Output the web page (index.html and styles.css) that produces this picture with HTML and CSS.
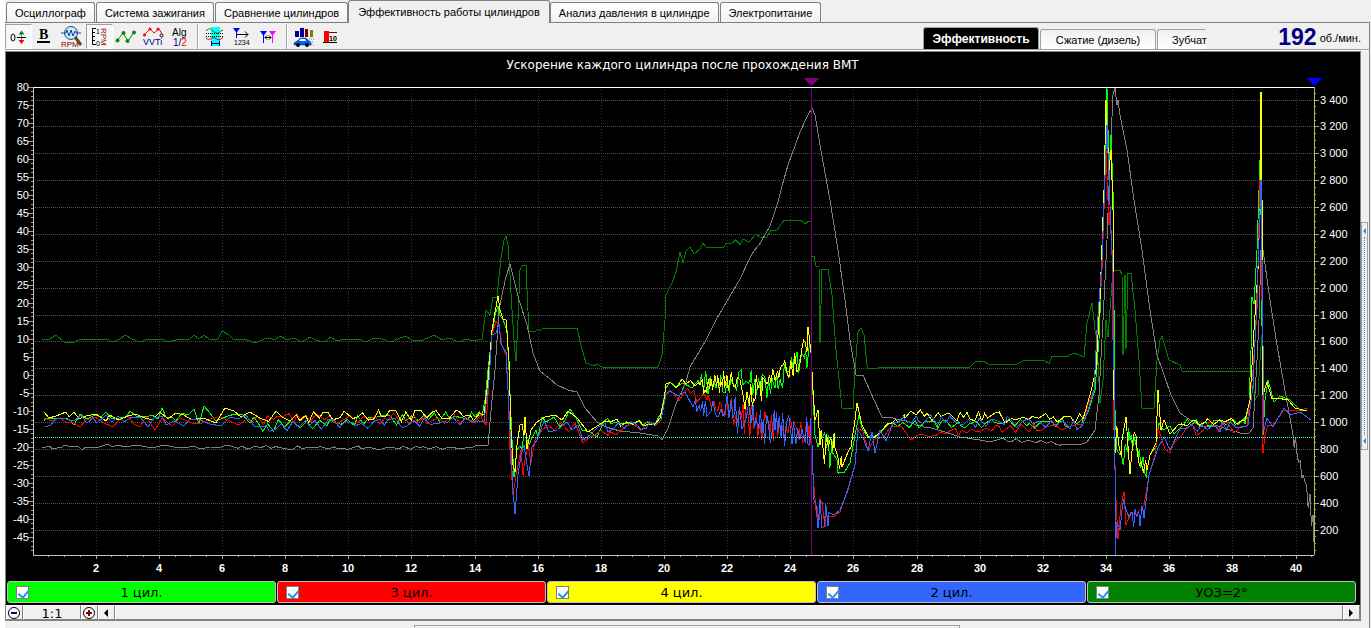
FILE: index.html
```html
<!DOCTYPE html>
<html lang="ru">
<head>
<meta charset="utf-8">
<title>Эффективность работы цилиндров</title>
<link rel="stylesheet" href="styles.css">
</head>
<body>
<div class="window">
  <nav class="tabs" role="tablist">
    <button class="tab" role="tab">Осциллограф</button>
    <button class="tab" role="tab">Система зажигания</button>
    <button class="tab" role="tab">Сравнение цилиндров</button>
    <button class="tab tab-active" role="tab" aria-selected="true">Эффективность работы цилиндров</button>
    <button class="tab" role="tab">Анализ давления в цилиндре</button>
    <button class="tab" role="tab">Электропитание</button>
  </nav>

  <div class="page">
    <header class="toolbar">
      <div class="tools">
        <button class="tool tool-pressed" aria-label="Сдвиг нуля">
          <svg viewBox="0 0 26 24"><ellipse cx="7" cy="12.500" rx="2" ry="3.500" fill="none" stroke="#000"/><path d="M11 12.500h9" stroke="#000"/><path d="M15.500 12V8M15.500 13v4" stroke="#808080"/><path d="M12.500 9.500l3-4 3 4z" fill="#108a10"/><path d="M12.500 15l3 4 3-4z" fill="#f00"/></svg>
        </button>
        <button class="tool" aria-label="Жирные линии">
          <svg viewBox="0 0 26 24"><text class="icon-bold" x="7" y="14">B</text><path d="M5 17h13" stroke="#000" stroke-width="2"/></svg>
        </button>
        <button class="tool" aria-label="Поиск по оборотам">
          <svg viewBox="0 0 26 24"><circle cx="12" cy="8" r="6.500" fill="#c8ecf8" stroke="#234a78"/><path d="M16 12l6 8" stroke="#5f4630" stroke-width="3"/><path d="M2 8h5l1-3 2 6 2-6 2 6 2-5 1 2h5" fill="none" stroke="#1640b0"/><text class="icon-rpm" x="2" y="22">RPM</text></svg>
        </button>
        <button class="tool tool-pressed" aria-label="Шкала оборотов">
          <svg viewBox="0 0 26 24"><path d="M9 3.500H5.500v16H9M6 7.500h2M6 11.500h2M6 15.500h2" fill="none" stroke="#000"/><text class="icon-mini" x="9" y="9">1</text><text class="icon-mini" x="9" y="21">0</text><text class="icon-rpm icon-vertical" x="3" y="-14" transform="rotate(90)">RPM</text></svg>
        </button>
        <button class="tool" aria-label="Точки графика">
          <svg viewBox="0 0 26 24"><path d="M4 16l6-8 5 8 6-9" fill="none" stroke="#009000"/><g fill="#008a00"><circle cx="4.500" cy="15.500" r="2"/><circle cx="10.500" cy="8" r="2"/><circle cx="14.500" cy="16" r="2"/><circle cx="21" cy="7.500" r="2"/></g></svg>
        </button>
        <button class="tool" aria-label="VVTi">
          <svg viewBox="0 0 26 24"><path d="M4 10l6-6 4 4 5-4 3 5" fill="none" stroke="#f00"/><g fill="#f00"><circle cx="4.500" cy="10" r="1.500"/><circle cx="10" cy="4" r="1.500"/><circle cx="18" cy="4" r="1.500"/></g><circle cx="21.500" cy="10.500" r="1.500" fill="#fff" stroke="#000"/><text class="icon-vvt" x="3" y="20">VVTi</text></svg>
        </button>
        <button class="tool" aria-label="Алгоритм">
          <svg viewBox="0 0 26 24"><text class="icon-alg" x="5" y="11">Alg</text><text class="icon-alg" x="6" y="21" fill="#000080">1/<tspan fill="#f00">2</tspan></text></svg>
        </button>
        <span class="divider"></span>
        <button class="tool" aria-label="Окно сравнения">
          <svg viewBox="0 0 26 24"><path d="M9 2h9v19H9z" fill="#0ff"/><path d="M4 6c3-3 4-3 7 0s6 3 9-1l1 1" fill="none" stroke="#008a00"/><path d="M4 8.500h18M4 11.500h18" stroke="#000" stroke-dasharray="1 1"/><path d="M4 13c4 4 6-2 9 0s5 3 8-1" fill="none" stroke="#d00000"/><path d="M10 18.500h7M9.500 16v5M17.500 16v5" stroke="#000080"/></svg>
        </button>
        <button class="tool" aria-label="Нумерация меток">
          <svg viewBox="0 0 26 24"><path d="M4 3h7l-3.500 5z" fill="#00f"/><path d="M7.500 7v6" stroke="#00f"/><path d="M8 9.500h11M16 6.500l3 3-3 3" fill="none" stroke="#000"/><text class="icon-mini" x="5" y="20">1234</text></svg>
        </button>
        <button class="tool" aria-label="Между метками">
          <svg viewBox="0 0 26 24"><path d="M4 6h7l-3.500 5z" fill="#00f"/><path d="M7.500 9v9" stroke="#00f"/><path d="M13 6h7l-3.500 5z" fill="#f0f"/><path d="M16.500 9v9" stroke="#f0f"/><path d="M9 12.500h6M11 10.500l-2 2 2 2M13 10.500l2 2-2 2" fill="none" stroke="#000"/></svg>
        </button>
        <span class="divider"></span>
        <button class="tool" aria-label="Разгон автомобиля">
          <svg viewBox="0 0 26 24"><path d="M4 6h4v6H4z" fill="#000080"/><path d="M9 3h4v9H9z" fill="#0000a0"/><path d="M14 4h3v8h-3z" fill="#800000"/><path d="M19 5h3v7h-3z" fill="#808000"/><path d="M3 18l3-2 4-3h5l3 3 2 1v3H3z" fill="#0068e8" stroke="#001070" stroke-width=".5"/><path d="M8 16l2-2h4l1 2z" fill="#fff"/><circle cx="7" cy="20" r="2"/><circle cx="16" cy="20" r="2"/><path d="M18 14h5M19 17h4M20 20h3" stroke="#888" stroke-dasharray="1 1"/></svg>
        </button>
        <button class="tool" aria-label="Уровень">
          <svg viewBox="0 0 26 24"><path d="M6 6h5v11H6z" fill="#f00"/><path d="M5 17.500h14" stroke="#000"/><path d="M11 7.500h8" stroke="#800000"/><text class="icon-mini icon-strong" x="11" y="16">10</text></svg>
        </button>
      </div>
      <div class="subtabs" role="tablist">
        <button class="subtab subtab-active" role="tab" aria-selected="true">Эффективность</button>
        <button class="subtab" role="tab">Сжатие (дизель)</button>
        <button class="subtab subtab-cut" role="tab">Зубчат</button>
      </div>
      <div class="speed"><strong class="speed-value">192</strong> <span class="speed-unit">об./мин.</span></div>
    </header>

    <div class="body">
      <main class="panel">
        <div class="chart-area"><svg class="chart" id="chart" role="img" aria-label="Ускорение каждого цилиндра"></svg></div>
        <div class="legend">
          <label class="series series-green"><input class="check" type="checkbox" checked><span class="series-name">1 цил.</span></label>
          <label class="series series-red"><input class="check" type="checkbox" checked><span class="series-name">3 цил.</span></label>
          <label class="series series-yellow"><input class="check" type="checkbox" checked><span class="series-name">4 цил.</span></label>
          <label class="series series-blue"><input class="check" type="checkbox" checked><span class="series-name">2 цил.</span></label>
          <label class="series series-dark"><input class="check" type="checkbox" checked><span class="series-name">УОЗ=2°</span></label>
        </div>
        <div class="scroller">
          <button class="zoom-button" aria-label="Уменьшить"><svg viewBox="0 0 14 14"><circle cx="7" cy="7" r="5.500" fill="#fff" stroke="#000"/><path d="M4 7h6" stroke="#000080" stroke-width="2"/></svg></button>
          <button class="ratio">1:1</button>
          <button class="zoom-button" aria-label="Увеличить"><svg viewBox="0 0 14 14"><circle cx="7" cy="7" r="5.500" fill="#fff" stroke="#000"/><path d="M4 7h6M7 4v6" stroke="#800000" stroke-width="2"/></svg></button>
          <button class="arrow" aria-label="Влево"><svg viewBox="0 0 14 14"><path d="M9 3v8L5 7z"/></svg></button>
          <div class="track"></div>
          <button class="arrow" aria-label="Вправо"><svg viewBox="0 0 14 14"><path d="M5 3v8l4-4z"/></svg></button>
        </div>
      </main>
      <aside class="side">
        <button class="splitter" aria-label="Свернуть панель"><span class="splitter-arrow"></span><span class="splitter-dots"></span><span class="splitter-arrow"></span></button>
      </aside>
    </div>
    <footer class="bottom"><div class="bottom-splitter"></div></footer>
  </div>
</div>
<script src="chart.js"></script>
</body>
</html>
```
FILE: styles.css
```css
* { box-sizing: border-box; }

body {
  margin: 0;
  background: #f0f0f0;
  color: #000;
  font: 11px/16px "Liberation Sans", Arial, sans-serif;
}

button {
  margin: 0;
  padding: 0;
  border: 0;
  background: none;
  color: inherit;
  font: inherit;
}

.window {
  display: flex;
  flex-direction: column;
  height: 100vh;
  min-height: 320px;
  overflow: hidden;
  border-left: 5px solid #fff;
  padding-right: 1px;
}

.tabs {
  display: flex;
  gap: 1px;
  height: 23px;
  padding: 2px 0 0 1px;
  border-bottom: 1px solid #808080;
}

.tab {
  padding: 0 8px;
  border: 1px solid #808080;
  border-bottom: 0;
  border-radius: 3px 3px 0 0;
  background: linear-gradient(#fff, #f0f0f0);
  white-space: nowrap;
}

.tab-active {
  margin: -2px -1px -1px;
  padding: 0 9px;
  background: #f0f0f0;
}

.page {
  display: flex;
  flex: 1;
  flex-direction: column;
  min-height: 0;
  border-right: 1px solid #808080;
}

.toolbar {
  display: flex;
  height: 27px;
  border-bottom: 1px solid #a0a0a0;
}

.tools {
  display: flex;
  flex: 1;
  padding-top: 1px;
}

.tool {
  width: 27px;
  padding: 0;
}

.tool svg {
  display: block;
  width: 26px;
  height: 24px;
}

.tool-pressed {
  border: 1px solid #a0a0a0;
  border-color: #a0a0a0 #fff #fff #a0a0a0;
  background: repeating-conic-gradient(#fff 0 25%, #f0f0f0 0 50%) 0 0 / 2px 2px;
}

.divider {
  width: 2px;
  margin: 0 3px;
  border-left: 1px solid #a0a0a0;
  border-right: 1px solid #fff;
}

.icon-bold { font: bold 14px "Liberation Serif", serif; }
.icon-rpm { fill: #900000; font: 8px "Liberation Sans", sans-serif; }
.icon-vertical { font-size: 8px; }
.icon-mini { font: 7px "Liberation Sans", sans-serif; }
.icon-strong { font-weight: bold; }
.icon-vvt { fill: #000080; font: 9px "Liberation Sans", sans-serif; }
.icon-alg { font: 10px "Liberation Sans", sans-serif; }

.subtabs {
  display: flex;
  align-items: flex-end;
  gap: 1px;
}

.subtab {
  width: 116px;
  height: 20px;
  border: 1px solid #a0a0a0;
  border-bottom: 0;
  border-radius: 3px 3px 0 0;
  background: linear-gradient(#f0f0f0, #fff);
}

.subtab-active {
  height: 22px;
  background: #000;
  color: #fff;
  font-size: 12px;
  font-weight: bold;
}

.subtab-cut {
  width: 48px;
  padding-left: 14px;
  border-right: 0;
  border-radius: 3px 0 0 0;
}

.speed {
  display: flex;
  align-items: center;
  justify-content: flex-end;
  gap: 3px;
  width: 164px;
  padding: 2px 8px 0 0;
  font-size: 11px;
}

.speed-value {
  color: #000080;
  font-size: 23px;
}

.speed-unit { padding-top: 2px; }

.body {
  display: flex;
  flex: 1;
  min-height: 0;
  border-top: 1px solid #fff;
}

.panel {
  display: flex;
  flex: 1;
  flex-direction: column;
  min-width: 0;
  border: 1px solid #808080;
  background: #000;
}

.chart-area {
  flex: 1;
  min-height: 0;
  overflow: hidden;
}

.chart {
  display: block;
  width: 100%;
  height: 100%;
}

.chart text {
  fill: #fff;
  font: 11px "Liberation Sans", Arial, sans-serif;
}

.chart .chart-title { font: 12px "DejaVu Sans", Verdana, sans-serif; }
.chart .time-label { font-weight: bold; }

.legend {
  display: flex;
  gap: 1px;
  padding: 0 4px 2px 1px;
}

.series {
  display: flex;
  flex: 1;
  align-items: center;
  height: 22px;
  padding: 0 8px;
  border: 1px solid #c0c0c0;
  border-radius: 3px;
  font: 13px/18px "DejaVu Sans", Verdana, sans-serif;
}

.series-name {
  flex: 1;
  padding: 2px 13px 0 0;
  text-align: center;
}

.series-green { background: #0f0; }
.series-red { background: #f00; }
.series-yellow { background: #ff0; }
.series-blue { background: #36f; }
.series-dark { background: #008000; }

.check {
  width: 13px;
  height: 13px;
  margin: 0;
  border: 1px solid #808080;
  appearance: none;
  background: #fff;
}

.check:checked::before {
  display: block;
  width: 5px;
  height: 8px;
  margin: 1px 0 0 3px;
  border: solid #2a8ff0;
  border-width: 0 2px 2px 0;
  content: "";
  transform: rotate(40deg);
}

.scroller {
  display: flex;
  height: 15px;
  background: #f0f0f0;
}

.scroller > * {
  border: 1px solid;
  border-color: #fff #808080 #808080 #fff;
}

.zoom-button,
.arrow { width: 17px; }

.scroller svg {
  display: block;
  width: 14px;
  height: 14px;
}

.ratio {
  width: 58px;
  font: 13px/15px "DejaVu Sans", Verdana, sans-serif;
}

.track { flex: 1; }

.side {
  display: flex;
  align-items: center;
  width: 8px;
}

.splitter {
  display: flex;
  flex-direction: column;
  align-items: center;
  gap: 3px;
  width: 7px;
  height: 40%;
  padding: 5px 0;
  border: 1px solid #a0a0a0;
}

.splitter-arrow {
  border: solid transparent;
  border-width: 3px 3px 3px 0;
  border-right-color: #2a8ff0;
}

.splitter-dots {
  flex: 1;
  border-left: 1px dotted #2a8ff0;
}

.bottom {
  display: flex;
  justify-content: center;
  height: 7px;
  padding-top: 4px;
}

.bottom-splitter {
  width: 40%;
  border: 1px solid #a0a0a0;
  border-bottom: 0;
}
```
FILE: chart.js
```js
const NS = 'http://www.w3.org/2000/svg';
const svg = document.getElementById('chart');

const GRID = { x: 33, y: 87, w: 1281, h: 468 };
const TRACES = [
  { color: '#008000', points: '42,339 50,339 56,335 64,342 75,342 80,339 107,339 112,342 120,339 125,335 132,339 140,342 148,339 163,339 167,342 180,339 190,339 194,335 199,339 204,335 209,339 218,339 222,331 229,335 233,339 245,339 252,342 258,342 264,339 270,338 274,340 281,336 286,340 294,338 302,342 310,337 316,340 324,342 331,337 336,341 346,339 358,339 366,342 374,338 382,339 390,342 398,339 405,336 412,340 420,341 428,338 434,335 442,340 450,338 458,342 466,339 474,341 482,339 486,310 490,315 493,297 497,297 501,258 504,240 506,236 508,245 510,275 512,310 514,340 516,361 518,320 520,270 522,266 526,265 527,290 529,332 536,331 538,329 540,331 543,328 555,329 577,328 581,345 586,363 594,366 597,364 602,367 658,367 662,355 665,320 666,295 672,283 676,272 680,252 683,263 686,251 690,247 694,254 700,249 703,243 706,247 724,247 726,243 ~750,241,3 756,234 760,237 767,237 771,230 777,230 784,220 800,220 803,222 806,224 808,221 811,221 811,257 814,256 816,266 819,267 820,343 821,305 822,269 828,269 832,295 836,350 842,408 853,408 855,370 858,332 861,328 864,335 867,365 868,369 888,367 970,367 976,361 984,361 988,364 1017,364 1025,360 1044,360 1049,364 1052,356 1068,356 1074,353 1084,357 1087,323 1092,303 1095,330 1097,340 1100,403 1103,380 1106,320 1108,337 1110,310 1113,270 1120,270 1122,275 1123,355 1125,275 1126,349 1128,273 1131,273 1135,310 1139,360 1142,408 1154,408 1157,360 1160,340 1162,336 1166,350 1169,360 1180,365 1182,371 1252,371 1255,400 1258,395 1260,360 1262,335' },
  { color: '#808080', points: '42,448 46,447 50,446 52,449 62,447 64,445 72,447 78,446 82,450 86,447 96,448 108,444 112,447 118,445 125,447 137,445 152,448 164,445 174,447 184,448 194,446 200,449 210,447 ~470,448,2 478,445 488,445 492,400 495,370 499,310 503,290 506,277 510,264 514,280 519,300 527,325 533,353 540,371 550,379 557,385 568,390 577,392 585,408 597,422 606,427 620,431 640,433 658,436 662,440 668,428 676,404 686,382 690,367 705,342 716,320 730,296 740,279 750,258 ~762,240,2 770,226 ~778,202,2 782,186 ~788,165,2 ~800,132,3 807,117 812,108 815,115 820,145 830,200 838,250 845,300 850,340 856,375 863,375 874,400 882,417 893,418 ~945,432,1 960,437 980,440 990,442 1000,439 ~1060,444,2 1080,445 1087,442 1095,430 1099,395 1103,320 1107,240 1110,160 1113,95 1115,88 1117,105 1118,100 1120,115 1127,150 1134,200 1142,250 1150,310 1157,355 1163,372 1171,395 1180,413 1193,422 1203,427 1215,425 1230,430 1240,433 1249,433 1253,428 1257,360 1259,320 1261,250 1263,250 1270,300 1277,345 1284,385 1290,418 1293,435 ~1303,475,9 ~1313,515,18 1314,542' },
  { color: '#00ff00', points: '44,421 46,418 50,419 57,418 66,418 71,421 74,425 80,414 87,419 95,415 101,417 106,412 112,419 126,417 130,411 136,416 146,417 152,415 158,419 162,408 166,417 172,417 176,421 182,413 188,415 194,409 199,424 204,406 210,413 216,421 228,416 235,414 242,414 250,423 254,417 260,426 ~482,416,6 485,400 488,370 492,335 495,315 498,306 500,315 503,320 507,330 509,370 512,440 514,477 517,450 520,446 522,449 525,425 528,448 531,440 536,430 538,437 542,417 546,422 554,417 560,427 565,420 570,409 576,418 582,430 590,432 597,437 604,421 ~620,423,4 ~655,424,3 661,413 666,388 670,382 676,387 683,383 692,388 ~700,384,5 ~750,382,13 ~775,388,14 ~795,362,13 ~811,353,14 813,395 815,435 818,447 ~832,452,20 ~840,472,12 ~850,463,8 856,430 859,415 862,428 868,438 ~893,423,6 ~1083,423,5 1088,412 1095,390 1099,340 1102,260 1105,160 1107,88 1109,170 1111,135 1113,190 1114,310 1115,410 1117,450 1120,455 ~1130,440,18 ~1147,470,12 1150,455 1156,447 1159,423 1163,430 1170,426 1174,434 1184,424 ~1245,424,6 1249,405 1251,350 1252,297 1254,304 1257,250 1259,190 1260,160 1261,215 1263,435 1265,400 1268,380 1274,402 1280,396 1290,400 1300,410 1307,410' },
  { color: '#ff0000', points: '44,418 52,421 59,418 66,422 74,423 80,427 86,420 95,417 104,423 113,427 120,419 128,416 134,424 140,427 146,417 155,430 162,418 172,426 180,418 192,423 200,424 210,419 220,417 228,420 238,425 248,419 ~482,419,6 486,425 489,380 492,335 496,321 499,325 502,345 506,355 508,390 510,450 513,495 516,475 519,460 521,450 523,475 525,460 528,445 531,463 535,440 542,430 ~575,423,8 583,443 590,437 ~655,425,6 661,418 666,395 670,390 674,394 679,401 685,391 ~707,400,7 ~730,412,11 ~755,425,18 ~775,428,20 ~795,425,16 ~811,435,15 813,475 816,510 ~826,516,16 833,517 840,512 848,488 855,465 858,428 863,432 868,451 ~893,426,6 902,427 911,440 918,435 ~1083,424,5 1088,404 1094,390 1098,330 1102,270 1106,150 1109,225 1110,212 1112,255 1113,340 1114,430 1116,500 1118,539 1121,505 1124,492 1126,525 1131,512 1136,515 1144,505 1149,475 1155,455 1158,428 1165,449 1170,453 ~1185,430,5 ~1247,426,7 1253,370 1257,310 1260,180 1261,160 1262,300 1263,453 1265,435 1268,425 1273,425 1284,410 1296,411 1308,408' },
  { color: '#ffff00', points: '44,412 49,418 56,416 66,412 69,417 74,412 79,419 86,416 96,414 106,421 110,415 118,420 128,416 136,414 142,417 152,420 160,412 168,419 176,413 184,415 192,420 200,418 206,419 216,423 225,408 234,411 241,417 250,412 258,417 ~484,415,6 488,380 492,330 495,312 498,296 500,310 503,319 506,320 509,360 511,430 513,465 515,472 517,445 520,425 522,424 524,435 525,417 527,449 531,430 537,422 545,417 555,415 562,420 568,411 577,418 588,432 605,421 ~655,424,5 660,418 664,400 666,384 670,382 676,388 682,379 ~700,385,5 ~740,380,12 743,395 ~765,382,18 ~780,370,12 ~807,352,16 808,327 811,352 813,390 815,420 818,410 820,445 ~835,448,18 ~842,467,10 848,452 851,447 855,420 857,403 862,425 869,438 ~893,422,5 ~905,418,4 911,411 916,415 ~1083,419,6 1090,395 1096,370 1100,300 1104,190 1106,100 1107,125 1109,170 1111,150 1113,210 1114,400 1115,453 ~1122,440,24 1126,417 1130,474 1133,440 ~1147,470,12 1150,455 1156,443 1158,390 1161,430 1164,420 1170,434 1178,425 ~1245,420,6 1250,400 1254,330 1258,270 1260,210 1261,92 1262,200 1263,395 1267,382 1272,399 1277,398 1288,400 1295,408 1307,411' },
  { color: '#3366ff', points: '45,427 51,425 56,418 66,419 74,421 81,415 87,423 93,418 97,423 106,415 112,422 118,416 124,422 132,417 140,417 148,427 154,418 162,416 166,425 174,421 184,426 190,419 200,420 210,424 221,426 230,417 238,419 246,415 254,426 ~484,421,6 489,380 492,335 496,333 499,324 501,344 506,352 508,390 511,450 513,490 515,514 518,475 521,455 524,445 527,465 529,476 532,447 537,440 544,421 549,432 557,430 567,422 572,430 578,425 583,440 590,435 598,427 ~655,426,6 661,420 666,394 670,391 678,396 685,392 693,407 ~725,411,9 ~755,424,19 ~775,430,22 ~811,430,17 812,445 814,500 816,505 818,528 820,500 822,528 ~828,512,18 834,515 840,510 848,490 855,465 858,430 864,440 868,451 872,432 875,453 880,430 886,441 893,423 ~905,420,4 ~1083,424,6 1088,410 1094,390 1097,330 1102,260 1105,175 1107,125 1109,180 1111,230 1113,270 1114,370 1115,470 1115,555 1117,522 1120,530 1122,510 ~1144,518,13 1149,475 1158,448 1164,437 1170,450 1180,429 ~1248,425,5 1253,385 1256,320 1259,240 1261,180 1262,260 1264,430 1267,418 1273,427 1284,408 1290,415 1300,412 1311,420' }
];

function expand(text, seed) {
  let state = seed;
  const random = () => (state = (state * 16807) % 2147483647) / 2147483647;
  const out = [];
  text.split(' ').forEach(token => {
    const ripple = token[0] === '~';
    const [x, y, amp] = token.replace('~', '').split(',').map(Number);
    if (ripple) {
      const [x0, y0] = out[out.length - 1];
      const step = () => amp > 8 ? 1 + random() * 1.5 : 2.5 + random() * 5;
      let side = 1;
      for (let px = x0 + step(); px < x; px += step()) {
        if (random() < 0.75) side = -side;
        out.push([px, y0 + (y - y0) * (px - x0) / (x - x0) + side * random() * amp]);
      }
    }
    out.push([x, y]);
  });
  return out;
}

const data = TRACES.map((t, i) => ({ color: t.color, points: expand(t.points, 7310021 * (i + 3)) }));

function add(name, attrs, text) {
  const el = document.createElementNS(NS, name);
  Object.entries(attrs).forEach(([k, v]) => el.setAttribute(k, v));
  if (text !== undefined) el.textContent = text;
  svg.append(el);
}

function line(x1, y1, x2, y2, stroke, dash) {
  const attrs = { x1, y1, x2, y2, stroke, 'shape-rendering': 'crispEdges' };
  if (dash) attrs['stroke-dasharray'] = dash;
  add('line', attrs);
}

function draw() {
  const { width, height } = svg.getBoundingClientRect();
  const left = 27, top = 35, right = width - 46, bottom = height - 26;
  const w = right - left, h = bottom - top;
  const mx = x => left + (x - GRID.x) / GRID.w * w;
  const my = y => top + (y - GRID.y) / GRID.h * h;
  const tx = t => left + t / 40.57 * w;
  const ly = v => top + (80 - v) / 130 * h;
  const ry = r => my(557 - r * 0.1344);
  const px = v => Math.floor(v) + 0.5;

  svg.replaceChildren();
  add('text', { x: (left + right) / 2 + 9, y: 17, 'text-anchor': 'middle', class: 'chart-title' }, 'Ускорение каждого цилиндра после прохождения ВМТ');

  for (let t = 2; t <= 40; t += 2) line(px(tx(t)), top, px(tx(t)), bottom, '#303030', '1 2');
  for (let r = 200; r <= 3400; r += 200) line(left, px(ry(r)), right, px(ry(r)), '#505050', '1 1');

  for (let t = 0.5; t <= 40.5; t += 0.5) {
    const major = t % 2 === 0;
    line(px(tx(t)), bottom, px(tx(t)), bottom + (major ? 4 : 2), '#a0a0a0');
    if (major) add('text', { x: Math.floor(tx(t)), y: bottom + 17, 'text-anchor': 'middle', class: 'time-label' }, t);
  }
  for (let v = 80; v > -50; v -= 1.25) {
    const major = v % 5 === 0;
    line(left - (major ? 5 : 2), px(ly(v)), left, px(ly(v)), '#a0a0a0');
    if (major) add('text', { x: left - 4, y: Math.round(ly(v)) + 4, 'text-anchor': 'end' }, v);
  }
  for (let r = 50; r <= 3450; r += 50) {
    const major = r % 200 === 0;
    line(right, px(ry(r)), right + (major ? 5 : 2), px(ry(r)), '#a0a0a0');
    if (major) add('text', { x: right + 6, y: Math.floor(ry(r)) + 4 }, r < 1000 ? r : Math.floor(r / 1000) + ' ' + String(r % 1000).padStart(3, '0'));
  }

  const cursor = px(mx(811.2));
  data.forEach(s => add('polyline', {
    points: s.points.map(([x, y]) => mx(x).toFixed(1) + ',' + my(y).toFixed(1)).join(' '),
    fill: 'none', stroke: s.color, 'shape-rendering': 'crispEdges'
  }));
  line(left, px(my(437.2)), right, px(my(437.2)), '#40ffff', '1 1');
  line(cursor, top, cursor, bottom, '#800080');
  line(left, top + 0.5, right, top + 0.5, '#fff');
  line(left + 0.5, top, left + 0.5, bottom, '#c0c0c0');
  line(left, bottom + 0.5, right, bottom + 0.5, '#c0c0c0');
  line(right + 0.5, top, right + 0.5, bottom, '#c0c040');
  [[cursor, '#800080'], [right + 0.5, '#00f']].forEach(([x, fill]) =>
    add('path', { d: `M${x - 8} ${top - 9}h16l-8 8z`, fill }));
}

new ResizeObserver(draw).observe(svg);
draw();
```
